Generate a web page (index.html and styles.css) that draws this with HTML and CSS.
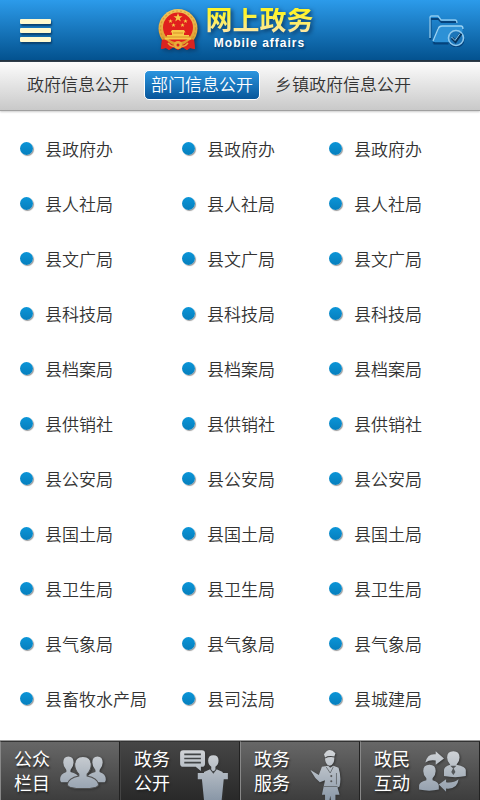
FILE: index.html
```html
<!DOCTYPE html>
<html lang="zh-CN">
<head>
<meta charset="utf-8">
<meta name="viewport" content="width=device-width, initial-scale=1">
<title>网上政务</title>
<link rel="stylesheet" href="styles.css">
</head>
<body>
<header class="topbar">
  <button class="icon-button menu" aria-label="菜单"><span class="menu-bar"></span><span class="menu-bar"></span><span class="menu-bar"></span></button>
  <div class="brand">
    <svg class="emblem" viewBox="0 0 40 44" aria-hidden="true">
      <defs>
        <linearGradient id="gold" x1="0" y1="0" x2="0" y2="1"><stop offset="0" stop-color="#f3c65c"/><stop offset="1" stop-color="#d99425"/></linearGradient>
      </defs>
      <path d="M4 31 3 41l5-1 3 2 4-3 5 3 5-3 4 3 3-2 5 1-1-10z" fill="#d3201c"/>
      <circle cx="20" cy="20.500" r="19.500" fill="url(#gold)"/>
      <circle cx="20" cy="20.500" r="17.500" fill="none" stroke="#b97a1c" stroke-width="1.200" stroke-dasharray="2 2" opacity=".4"/>
      <circle cx="20" cy="19.500" r="15" fill="#e1201d"/>
      <g fill="#f7c948">
        <path d="m20 5 1.200 3.200h3.300l-2.700 2 1 3.200-2.800-2-2.800 2 1-3.200-2.700-2h3.300z"/>
        <path id="star" d="m12.500 11 .6 1.500h1.600l-1.300 1 .5 1.600-1.400-1-1.400 1 .5-1.600-1.300-1h1.600z"/>
        <use href="#star" x="15"/><use href="#star" x="3" y="4"/><use href="#star" x="12" y="4"/>
        <path d="M14 22h12l1.500 2.500H26V27h5v1.500h2v3H7v-3h2V27h5v-2.500h-1.500z"/>
      </g>
      <path d="M7 29h26M15 25h10" stroke="#c8781d" stroke-width=".7"/>
      <path d="M4 32c5-2 7 4 12 5h8c5-1 7-7 12-5l1 9-5-1-3 2-5-3-4 3-4-3-5 3-3-2-5 1z" fill="#d92420"/>
      <circle cx="20" cy="37" r="4" fill="#e9ad3b"/><circle cx="20" cy="37" r="1.500" fill="#d92420"/>
      <path d="M10 35q3 4 6 3M30 35q-3 4-6 3" fill="none" stroke="#e9ad3b" stroke-width="1.500"/>
    </svg>
    <div class="brand-text">
      <h1 class="brand-name">网上政务</h1>
      <p class="brand-sub">Mobile affairs</p>
    </div>
  </div>
  <button class="icon-button folder" aria-label="已办文件">
    <svg class="folder-icon" viewBox="0 -2 38 34" aria-hidden="true">
      <g fill="none" stroke="#05427b" stroke-width="2" stroke-linejoin="round" transform="translate(.5 1.500)"><path d="M2 23V2.500h8l3 3h16M5 27l5-15h25M5 27h15"/><circle cx="28" cy="23" r="7"/></g>
      <path d="M2 23V2.500Q2 1 3.500 1H10l3 4h14q2 0 2 3" fill="none" stroke="#8bc9ef" stroke-width="1.400"/>
      <path d="m5 27 5-13q1-3 4-3h19q3 0 2 3l-4 13z" fill="#2d91d6"/>
      <path d="m5 26 5-12q1-3 4-3h19q2 0 2 3" fill="none" stroke="#9bd3f4" stroke-width="1.300"/>
      <circle cx="28" cy="23" r="7.500" fill="#1c75b9" stroke="#8fc9ee" stroke-width="1.600"/>
      <path d="m24 23 3.500 3.500 5.500-8" fill="none" stroke="#06345f" stroke-width="3"/>
      <path d="m23.500 22 3.500 3.500 5-7" fill="none" stroke="#91cbee" stroke-width="1"/>
    </svg>
  </button>
</header>
<nav class="tabs" aria-label="信息公开">
  <a class="tab" href="#">政府信息公开</a>
  <a class="tab tab-active" href="#" aria-current="page">部门信息公开</a>
  <a class="tab" href="#">乡镇政府信息公开</a>
</nav>
<main class="content">
  <ul class="departments">
    <li><a href="#">县政府办</a></li><li><a href="#">县政府办</a></li><li><a href="#">县政府办</a></li>
    <li><a href="#">县人社局</a></li><li><a href="#">县人社局</a></li><li><a href="#">县人社局</a></li>
    <li><a href="#">县文广局</a></li><li><a href="#">县文广局</a></li><li><a href="#">县文广局</a></li>
    <li><a href="#">县科技局</a></li><li><a href="#">县科技局</a></li><li><a href="#">县科技局</a></li>
    <li><a href="#">县档案局</a></li><li><a href="#">县档案局</a></li><li><a href="#">县档案局</a></li>
    <li><a href="#">县供销社</a></li><li><a href="#">县供销社</a></li><li><a href="#">县供销社</a></li>
    <li><a href="#">县公安局</a></li><li><a href="#">县公安局</a></li><li><a href="#">县公安局</a></li>
    <li><a href="#">县国土局</a></li><li><a href="#">县国土局</a></li><li><a href="#">县国土局</a></li>
    <li><a href="#">县卫生局</a></li><li><a href="#">县卫生局</a></li><li><a href="#">县卫生局</a></li>
    <li><a href="#">县气象局</a></li><li><a href="#">县气象局</a></li><li><a href="#">县气象局</a></li>
    <li><a href="#">县畜牧水产局</a></li><li><a href="#">县司法局</a></li><li><a href="#">县城建局</a></li>
  </ul>
</main>
<nav class="bottom" aria-label="主导航">
  <a class="bottom-item" href="#">
    <span class="bottom-label">公众<br>栏目</span>
    <svg class="bottom-icon" viewBox="1 1 48 52" aria-hidden="true">
      <defs>
        <linearGradient id="steel" x1="0" y1="0" x2="0" y2="52" gradientUnits="userSpaceOnUse"><stop offset="0" stop-color="#d8dadc"/><stop offset="1" stop-color="#8997a7"/></linearGradient>
      </defs>
      <g fill="url(#steel)">
        <path id="side-person" d="M5 17q0-6 5-6t5 6q0 4-3 7v2q7 2 8 5l-6 2-2 3H4q-2 0-2-3 0-5 6-7v-2q-3-3-3-7z"/>
        <use href="#side-person" transform="matrix(-1 0 0 1 48 0)"/>
        <path d="M16 19q0-8 8-8t8 8q0 5-4 9v2q10 2 11 8 0 4-15 4T9 38q1-6 11-8v-2q-4-4-4-9z" stroke="#505050" stroke-width="1"/>
      </g>
    </svg>
  </a>
  <a class="bottom-item bottom-active" href="#" aria-current="page">
    <span class="bottom-label">政务<br>公开</span>
    <svg class="bottom-icon" viewBox="0 0 48 52" aria-hidden="true">
      <g fill="url(#steel)">
        <path d="M4 4h18q3 0 3 3v10q0 3-3 3h-1v4l-5-4H4q-3 0-3-3V7q0-3 3-3z"/>
        <path d="M28 14q0-5 5-5t5 5q0 4-3 6v2l7 3v1h5v6h-4l-2 20H24l-2-20h-4v-6h6v-1l7-3v-2q-3-2-3-6z"/>
      </g>
      <path d="M5 8h16M5 12h16M5 16h16" stroke="#414446" stroke-width="1.600"/>
      <path d="m30 22 3 4 3-4M33 24v2" fill="none" stroke="#414446"/>
    </svg>
  </a>
  <a class="bottom-item" href="#">
    <span class="bottom-label">政务<br>服务</span>
    <svg class="bottom-icon" viewBox="-8 -1 48 52" aria-hidden="true">
      <g fill="url(#steel)">
        <path d="M16 7q5-8 11-1l-1 3q-6-1-9 1z"/>
        <path d="M17 11q4-2 9-1 0 7-4.500 8-4.500-1-4.500-7z"/>
        <path d="m14 19 6-1 2 2 3-2 5 2q3 9 1 18l-2 1 2 7h-4v7h-4l-1-6-1 6h-4v-7h-3l3-14-5 2q-5-4-8-10l-1-2 8 5z"/>
      </g>
      <path d="m18 19 4 6 3-6M28 25v11M15 38h14" fill="none" stroke="#606468" stroke-width=".8"/>
      <circle cx="23" cy="28" r="1" fill="#555"/><circle cx="23" cy="33" r="1" fill="#555"/>
    </svg>
  </a>
  <a class="bottom-item" href="#">
    <span class="bottom-label">政民<br>互动</span>
    <svg class="bottom-icon" viewBox="4 1 48 52" aria-hidden="true">
      <g fill="url(#steel)">
        <path d="M6 25q0-6 6-6t6 6q0 4-3 7v2q6 2 6 5v4q-9 2-19 0v-4q0-3 7-5v-2q-3-3-3-7z" transform="translate(2)"/>
        <path d="M31 12q0-6 6-6t6 6q0 4-3 7 9 2 9 5v6q-10 2-21 0v-6q0-3 6-5-3-3-3-7z"/>
        <path d="M10 17Q12 8 20 9V6l8 7-8 6v-4q-6-1-10 2z"/>
        <path d="M42 33q-1 10-12 9v3l-7-7 7-5v3q7 1 12-3z"/>
      </g>
      <path d="m34 20 3 3 3-3M37 22l-2 4 2 3 2-3z" fill="#55585b"/>
    </svg>
  </a>
</nav>
</body>
</html>
```
FILE: styles.css
```css
* { box-sizing: border-box; }

body {
  margin: 0;
  min-height: 100vh;
  display: flex;
  flex-direction: column;
  background: #fff;
  color: #333;
  font-family: "Noto Sans CJK SC", sans-serif;
  font-weight: 350;
}

a { color: inherit; text-decoration: none; }

.topbar {
  display: flex;
  align-items: center;
  justify-content: space-between;
  height: 62px;
  padding: 0 14px 0 20px;
  background: linear-gradient(#2c9bea, #03528f);
  border-bottom: 2px solid #23323f;
}

.icon-button {
  padding: 0;
  border: 0;
  background: none;
  cursor: pointer;
}

.menu {
  display: flex;
  flex-direction: column;
  gap: 4px;
  width: 31px;
}

.menu-bar {
  width: 100%;
  height: 5px;
  border-radius: 1px;
  background: #fff9cf;
  box-shadow: 1px 2px 2px #0a416f;
}

.brand {
  display: flex;
  align-items: center;
  gap: 8px;
  margin-right: 8px;
}

.emblem {
  width: 40px;
  height: 44px;
  filter: drop-shadow(2px 2px 2px #0a3d6b);
}

.brand-text { text-align: center; }

.brand-name {
  margin: 0;
  font-family: "Liberation Sans", "Noto Sans CJK SC", sans-serif;
  font-size: 27px;
  line-height: 26px;
  font-weight: 700;
  color: transparent;
  background: linear-gradient(#fff32c 20%, #ffe8a0 90%);
  background-clip: text;
  -webkit-background-clip: text;
  filter: drop-shadow(2px 2px 2px #0a3d6b);
}

.brand-sub {
  margin: 0;
  color: #fff;
  font-family: "Liberation Sans", Arial, sans-serif;
  font-size: 12px;
  line-height: 18px;
  font-weight: 700;
  letter-spacing: 1px;
  text-shadow: 1px 2px 2px #0a3d6b;
}

.folder-icon {
  display: block;
  width: 38px;
  height: 34px;
}

.tabs {
  display: flex;
  align-items: center;
  gap: 8px;
  height: 49px;
  padding: 0 20px 3px;
  background: linear-gradient(#fcfcfc, #c9c9c9);
  border-bottom: 1px solid #a0a0a0;
  box-shadow: 0 1px 2px #ccc;
}

.tab {
  padding: 0 6px 2px;
  border: 1px solid transparent;
  border-radius: 5px;
  font-size: 17px;
  line-height: 26px;
  white-space: nowrap;
}

.tab-active {
  color: #fff;
  border-color: #fff;
  background: linear-gradient(#2b95df, #07569a);
}

.content { flex: 1; padding: 10px 0 13px 20px; }

.departments {
  display: grid;
  grid-template-columns: 162fr 147fr 151fr;
  margin: 0;
  padding: 0;
  list-style: none;
}

.departments a {
  display: flex;
  align-items: center;
  gap: 12px;
  height: 55px;
  font-size: 17px;
  white-space: nowrap;
}

.departments a::before {
  content: "";
  width: 13px;
  height: 13px;
  border-radius: 50%;
  background: linear-gradient(#0b95d8, #067fbd);
  box-shadow: 1px 1px 1px #999;
}

.bottom {
  position: sticky;
  bottom: 0;
  display: grid;
  grid-template-columns: repeat(4, 1fr);
  height: 60px;
  border-top: 1px solid #999;
  background: #555;
}

.bottom-item {
  display: flex;
  align-items: center;
  gap: 9px;
  padding-left: 13px;
  color: #fff;
  background: linear-gradient(#676767, #3d3d3d);
  border-top: 1px solid #333;
  border-left: 1px solid #888;
  border-right: 1px solid #222;
}

.bottom-active {
  background: linear-gradient(#464646, #292929);
  border-left-color: #444;
}

.bottom-label {
  padding-bottom: 2px;
  font-size: 18px;
  line-height: 24px;
  font-weight: 400;
  white-space: nowrap;
  text-shadow: 1px 2px 2px #222;
}

.bottom-icon {
  width: 50px;
  height: 54px;
  align-self: flex-end;
  filter: drop-shadow(1px 1px 1px #333);
}
```
